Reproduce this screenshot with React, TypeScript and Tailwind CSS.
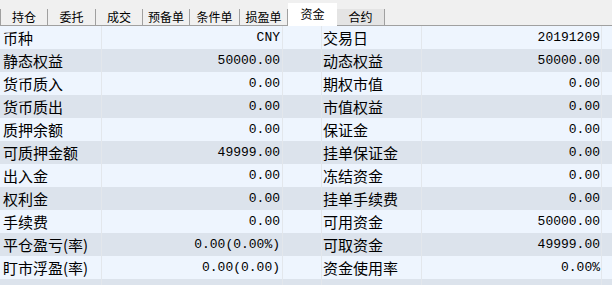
const tabs = [
  { name: "持仓", w: "w-[48px]" },
  { name: "委托", w: "w-[48px]" },
  { name: "成交", w: "w-[47px]" },
  { name: "预备单", w: "w-[47px]" },
  { name: "条件单", w: "w-[50px]" },
  { name: "损盈单", w: "w-[48px]" },
];

const rows: [string, string, string, string][] = [
  ["币种", "CNY", "交易日", "20191209"],
  ["静态权益", "50000.00", "动态权益", "50000.00"],
  ["货币质入", "0.00", "期权市值", "0.00"],
  ["货币质出", "0.00", "市值权益", "0.00"],
  ["质押余额", "0.00", "保证金", "0.00"],
  ["可质押金额", "49999.00", "挂单保证金", "0.00"],
  ["出入金", "0.00", "冻结资金", "0.00"],
  ["权利金", "0.00", "挂单手续费", "0.00"],
  ["手续费", "0.00", "可用资金", "50000.00"],
  ["平仓盈亏(率)", "0.00(0.00%)", "可取资金", "49999.00"],
  ["盯市浮盈(率)", "0.00(0.00)", "资金使用率", "0.00%"],
  ["", "", "", ""],
];

const cjk = "font-['Noto_Sans_CJK_SC',sans-serif]";
const mono = "font-['Liberation_Mono','Noto_Sans_CJK_SC',monospace]";

export default function App() {
  return (
    <div className={`w-[612px] h-[285px] overflow-hidden bg-[#f0f0f0] text-black ${cjk}`}>
      {/* tab strip */}
      <div className="flex items-end h-[26px] border-b border-[#a0a0a0]">
        {tabs.map((t, i) => (
          <div
            key={t.name}
            className={`${t.w} h-[16px] flex items-center justify-center text-[12px] leading-none border-r border-[#a0a0a0] ${i === 0 ? "border-l" : ""}`}
          >
            {t.name}
          </div>
        ))}
        <div className="w-[49px] h-[23px] -mb-px bg-white flex items-center justify-center text-[12px] leading-none pb-[2px]">
          资金
        </div>
        <div className="w-[48px] h-[16px] bg-[#e4e4e4] border-r border-[#a0a0a0] flex items-center justify-center text-[12px] leading-none">
          合约
        </div>
      </div>

      {/* fund table */}
      <div>
        {rows.map((r, i) => (
          <div
            key={i}
            className={`grid grid-cols-[101px_181px_39px_100px_180px_1fr] h-[23px] text-[15px] leading-[23px] ${
              i % 2 === 0 ? "bg-[#eef5fe]" : "bg-[#dce3ec]"
            }`}
          >
            <div className="pl-[3px] whitespace-nowrap">{r[0]}</div>
            <div className={`border-l border-[#e3e7ec] text-right pr-[2px] text-[13px] ${mono}`}>{r[1]}</div>
            <div className="border-l border-[#e3e7ec]" />
            <div className="border-l border-[#e3e7ec] pl-[1px] whitespace-nowrap">{r[2]}</div>
            <div className={`border-l border-[#e3e7ec] text-right pr-[1px] text-[13px] ${mono}`}>{r[3]}</div>
            <div className="border-l border-[#e3e7ec]" />
          </div>
        ))}
      </div>
    </div>
  );
}
